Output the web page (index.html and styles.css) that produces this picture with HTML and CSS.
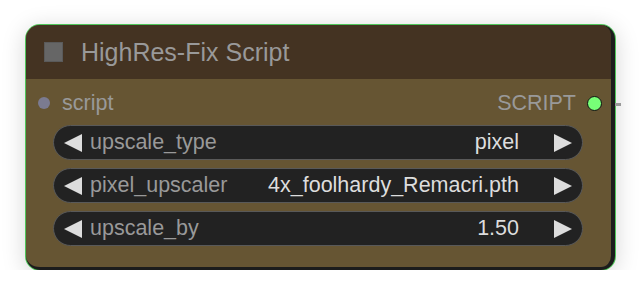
FILE: index.html
```html
<!DOCTYPE html>
<html lang="en">
<head>
    <meta charset="UTF-8">
    <title>HighRes-Fix Script</title>
    <link rel="stylesheet" href="styles.css">
</head>
<body>
    <div class="node">
        <div class="title">
            <span class="box"></span>
            <span class="title-text">HighRes-Fix Script</span>
        </div>
        <div class="content">
            <div class="slots">
                <div class="slot-in"><span class="dot-in"></span>script</div>
                <div class="slot-out">SCRIPT<span class="dot-out"></span></div>
            </div>

            <div class="widget">
                <span class="arrow left"></span>
                <span class="label">upscale_type</span>
                <span class="value">pixel</span>
                <span class="arrow right"></span>
            </div>
            <div class="widget">
                <span class="arrow left"></span>
                <span class="label">pixel_upscaler</span>
                <span class="value">4x_foolhardy_Remacri.pth</span>
                <span class="arrow right"></span>
            </div>
            <div class="widget">
                <span class="arrow left"></span>
                <span class="label">upscale_by</span>
                <span class="value">1.50</span>
                <span class="arrow right"></span>
            </div>
        </div>
        <span class="link"></span>
    </div>
</body>
</html>
```

FILE: styles.css
```css
body { margin: 0; background: #fff; font-family: "Liberation Sans", Arial, sans-serif; padding: 25px 0 0 26px; }

.node {
    position: relative;
    width: 585px;
    background-color: #665533;
    border-right: 4px solid #1c1c1c;
    border-bottom: 3px solid #1c1c1c;
    border-radius: 14px;
    box-shadow: 0 0 0 1px #4fc65a, 0 4px 24px rgba(0, 0, 0, 0.18);
}

.title {
    height: 54px;
    background-color: #443322;
    border-radius: 14px 10px 0 0;
    display: flex;
    align-items: center;
    padding-left: 18px;
}
.box { width: 17px; height: 18px; background: #666; border: 1px solid #5a5a5a; margin-right: 18px; }
.title-text { color: #999; font-size: 25px; }

.content { padding: 12px 0 21px; }

.slots { display: flex; justify-content: space-between; align-items: center; height: 24px; margin-bottom: 10px; color: #999; font-size: 21.5px; }
.slot-in { display: flex; align-items: center; padding-left: 12px; }
.dot-in { width: 12px; height: 12px; border-radius: 50%; background: #7b7b90; margin-right: 12px; }
.slot-out { display: flex; align-items: center; padding-right: 9px; }
.dot-out { width: 13px; height: 13px; border-radius: 50%; background: #77ff77; border: 1.5px solid #111; margin-left: 11px; }

.widget {
    display: flex;
    align-items: center;
    height: 33px;
    margin: 0 28px 8px 27px;
    padding: 0 10px;
    background: #222;
    border: 1px solid #595959;
    border-radius: 18px;
    font-size: 21.5px;
}
.widget:last-child { margin-bottom: 0; }
.label { color: #999; margin-left: 8px; flex: 1; }
.value { color: #ddd; margin-right: 35px; }

.arrow { width: 0; height: 0; border-top: 9.5px solid transparent; border-bottom: 9.5px solid transparent; }
.arrow.left { border-right: 18px solid #ddd; }
.arrow.right { border-left: 18px solid #ddd; }

.link { position: absolute; right: -10px; top: 78px; width: 6px; height: 3px; background: #999; }
```
